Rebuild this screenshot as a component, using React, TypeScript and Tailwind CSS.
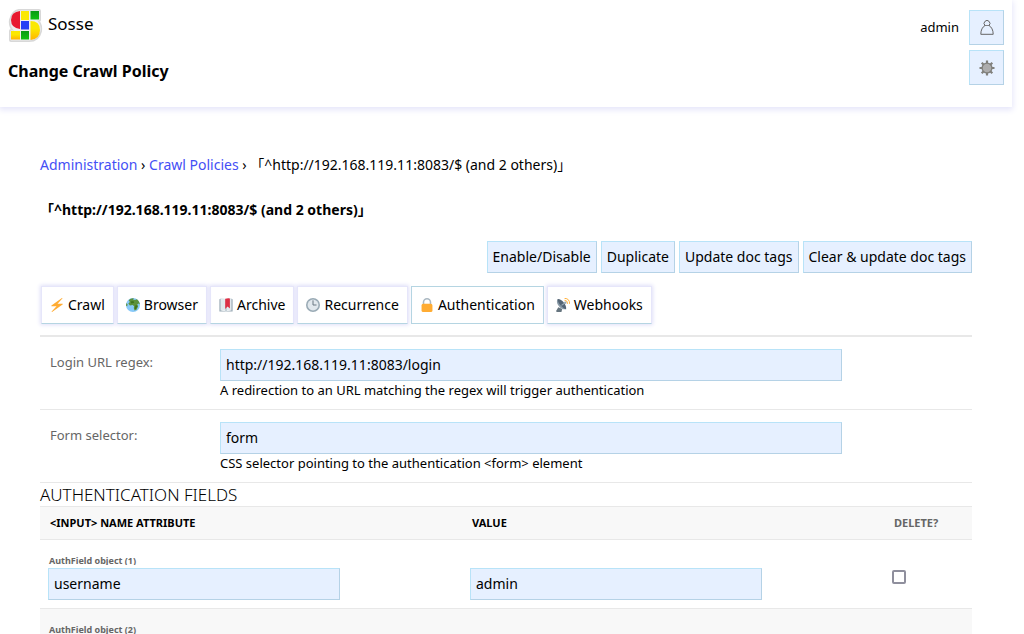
import React from "react";
import clsx from "clsx";

const boxBorder =
  "border border-t-[#b8e3f8] border-l-[#b8e3f8] border-r-[#b5d2e6] border-b-[#b5d2e6] bg-[#e6f0ff]";

const Logo: React.FC = () => (
  <svg viewBox="1 1 36 36" className="w-9 h-9" aria-hidden="true">
    <defs>
      <linearGradient id="yellow" x1="0" y1="0" x2="0" y2="1">
        <stop offset="0.4" stopColor="#fbe800" />
        <stop offset="1" stopColor="#ffb400" />
      </linearGradient>
      <linearGradient id="green" x1="0" y1="0" x2="0" y2="1">
        <stop offset="0" stopColor="#0a9a14" />
        <stop offset="1" stopColor="#10c010" />
      </linearGradient>
    </defs>
    <path
      d="M12 4H32V13H29Q34 17 33 24Q31 33 22 33H4V24H8Q3 20 4 13Q6 5 12 4Z"
      fill="#ddd"
      stroke="#d8d8d8"
      strokeWidth="4"
      strokeLinejoin="round"
    />
    <path
      d="M12 4H32V13H29Q34 17 33 24Q31 33 22 33H4V24H8Q3 20 4 13Q6 5 12 4Z"
      fill="#eee"
      stroke="#eee"
      strokeWidth="1"
    />
    <path d="M13 4V22Q4 21 4 13Q4 5 13 4Z" fill="#e8192f" />
    <path d="M14 4H22V13H14Z" fill="#fbe800" />
    <path d="M23.500 4H32V12.500H23.500Z" fill="url(#green)" />
    <path d="M14 14H22V22.500H14Z" fill="#2340f5" />
    <path d="M23.500 14Q33 14 33 23Q33 32 23.500 33Z" fill="url(#yellow)" />
    <path d="M4 24H13V32.500H4Z" fill="url(#yellow)" />
    <path d="M14 24H22V32.500H14Z" fill="url(#green)" />
  </svg>
);

const UserIcon: React.FC = () => (
  <svg viewBox="0 0 14 16" className="w-3.5 h-4 -mt-0.5" fill="none" stroke="#666" aria-hidden="true">
    <path d="M5 6.500A2.900 2.900 0 1 1 9 6.500C11.500 8 13.200 11 13.200 15.300H0.800C0.800 11 2.500 8 5 6.500Z" />
    <path d="M4.500 6.500H9.500" strokeWidth="0.800" />
  </svg>
);

const GearIcon: React.FC = () => (
  <svg viewBox="0 0 16 16" className="w-4 h-4" aria-hidden="true">
    <g stroke="#80807c" strokeWidth="2.200">
      <path d="M8 0.500V15.500M0.500 8H15.500M2.700 2.700L13.300 13.300M13.300 2.700L2.700 13.300" />
    </g>
    <circle cx="8" cy="8" r="4.900" fill="#adadad" stroke="#80807c" strokeWidth="1.300" />
  </svg>
);

const BoltIcon = () => (
  <path
    fill="#ffac33"
    d="M32.900 15.600c-.1-.4-.5-.6-.9-.6H19.400L31.800 1.600c.3-.3.4-.9.1-1.200-.3-.4-.8-.5-1.200-.2l-27 19.100c-.3.3-.5.7-.4 1.100.2.400.5.600 1 .600h12.600L4.200 34.400c-.3.300-.4.900-.1 1.200.3.400.8.500 1.200.2l27-19.100c.5-.3.700-.7.600-1.100z"
  />
);

const GlobeIcon = () => (
  <>
    <circle fill="#88c9f9" cx="18" cy="18" r="18" />
    <path
      fill="#5c913b"
      d="M7 6C10 2 16 0 20 1L18 4L23 5L28 3C32 6 35 11 36 17L32 14L29 17L31 22L27 30L22 32L20 26L21 21L17 18L10 19L6 14L10 10ZM1 13L4 16L3 22L0 19Z"
    />
    <path fill="#3e721d" d="M12 9L19 8L21 12L14 14ZM25 18L30 20L25 29L22 27Z" />
  </>
);

const BookmarkIcon = () => (
  <>
    <path fill="#99aab5" d="M1 3L6 1V32L18 34L30 32V1L35 3V35H1Z" />
    <path fill="#e1e8ed" d="M4 1Q12 0 18 3Q25 0 32 1V32Q24 31 18 34Q11 31 4 32Z" />
    <path fill="#99aab5" d="M17 3H19V34H17Z" />
    <path fill="#dd2e44" d="M16 2Q22 0 28 1V27L22 22L16 28Z" />
  </>
);

const ClockIcon = () => (
  <>
    <circle fill="#99aab5" cx="18" cy="18" r="18" />
    <circle fill="#e1e8ed" cx="18" cy="18" r="14" />
    <path d="M18 7V18H26" fill="none" stroke="#66757f" strokeWidth="2.500" strokeLinecap="round" />
  </>
);

const LockIcon = () => (
  <>
    <path d="M9 20V11a9 9 0 0 1 18 0V20" fill="none" stroke="#aab8c2" strokeWidth="4" />
    <rect x="4" y="15" width="28" height="21" rx="4" fill="#ffac33" />
  </>
);

const AntennaIcon = () => (
  <>
    <path fill="#66757f" d="M6 24L16 28L14 36H1V32Z" />
    <path fill="#8899a6" d="M4 3C-2 13 11 31 26 29Z" />
    <path fill="#546575" d="M4 3C13 1 28 17 26 29C16 25 5 14 4 3Z" />
    <path d="M14 19L24 12" stroke="#99aab5" strokeWidth="3" />
    <circle cx="24" cy="12" r="3" fill="#99aab5" />
    <path
      d="M23 6Q30 6 30 14M23 1Q35 1 35 14"
      fill="none"
      stroke="#ffac33"
      strokeWidth="2.500"
      strokeLinecap="round"
    />
  </>
);

const tabs = [
  { label: "Crawl", icon: BoltIcon },
  { label: "Browser", icon: GlobeIcon },
  { label: "Archive", icon: BookmarkIcon },
  { label: "Recurrence", icon: ClockIcon },
  { label: "Authentication", icon: LockIcon },
  { label: "Webhooks", icon: AntennaIcon },
];

const actions = ["Enable/Disable", "Duplicate", "Update doc tags", "Clear & update doc tags"];

const fields = [
  {
    id: "login_url_re",
    label: "Login URL regex:",
    value: "http://192.168.119.11:8083/login",
    help: "A redirection to an URL matching the regex will trigger authentication",
  },
  {
    id: "form_selector",
    label: "Form selector:",
    value: "form",
    help: "CSS selector pointing to the authentication <form> element",
  },
];

const authFields = [
  { name: "username", value: "admin" },
  { name: "password", value: "admin" },
];

const App: React.FC = () => {
  const policy = "「^http://192.168.119.11:8083/$ (and 2 others)」";

  return (
    <div className="h-screen overflow-hidden pr-3 bg-white text-black text-sm font-['Noto_Sans','Noto_Sans_CJK_JP',sans-serif]">
      {/* Header */}
      <header className="flex justify-between px-2 pt-2 pb-[22px] shadow-[0_2px_6px_1px_#e6e6fa]">
        <div>
          <a href="#" className="flex items-center gap-1 text-[17px] leading-6">
            <Logo />
            <span className="pb-1">Sosse</span>
          </a>
          <h1 className="mt-[15px] text-base font-bold">Change Crawl Policy</h1>
        </div>
        <div className="flex gap-2.5 pt-0.5">
          <span className="h-[35px] flex items-center text-[13px]">admin</span>
          <div className="flex flex-col gap-[5px]">
            <button aria-label="User" className={clsx("w-[35px] h-[35px] flex items-center justify-center", boxBorder)}>
              <UserIcon />
            </button>
            <button aria-label="Settings" className={clsx("w-[35px] h-[35px] flex items-center justify-center", boxBorder)}>
              <GearIcon />
            </button>
          </div>
        </div>
      </header>

      <main className="px-10 pt-12">
        <nav className="leading-5">
          <a href="#" className="text-[#444ff5]">Administration</a>
          {" › "}
          <a href="#" className="text-[#444ff5]">Crawl Policies</a>
          {" › "}
          {policy}
        </nav>
        <h2 className="mt-[25px] leading-5 font-bold">{policy}</h2>

        {/* Actions */}
        <div className="mt-[21px] flex justify-end gap-1">
          {actions.map((action) => (
            <button key={action} className={clsx("h-8 px-[5px]", boxBorder)}>
              {action}
            </button>
          ))}
        </div>

        {/* Tabs */}
        <div className="mt-[13px] ml-px flex gap-[3px]">
          {tabs.map(({ label, icon: Icon }) => (
            <button
              key={label}
              className={clsx(
                "h-[38px] px-2 flex items-center gap-1 border border-b-[#b5d5e2]",
                label === "Authentication"
                  ? "border-[#b5d5e2]"
                  : "border-x-[#e6e6fa] border-t-[#e6e6fa] shadow-[0_0_4px_1px_#e0e0f8]"
              )}
            >
              <svg viewBox="0 0 36 36" className="w-3.5 h-3.5" aria-hidden="true">
                <Icon />
              </svg>
              {label}
            </button>
          ))}
        </div>

        {/* Form rows */}
        <div className="mt-[11px] border-t-2 border-[#e8e8e8]">
          {fields.map((field) => (
            <div key={field.id} className="flex px-2.5 pt-3 pb-2.5 border-b border-[#e8e8e8]">
              <label htmlFor={field.id} className="w-[170px] shrink-0 pt-1 text-[13px] leading-[18px] text-[#666]">
                {field.label}
              </label>
              <div className="grow">
                <input
                  id={field.id}
                  defaultValue={field.value}
                  className={clsx("block w-full max-w-[622px] h-8 px-[5px] pb-0.5", boxBorder)}
                />
                <p className="text-[13px] leading-[18px]">{field.help}</p>
              </div>
            </div>
          ))}
        </div>

        {/* Authentication fields */}
        <h2 className="text-[17px] leading-[23px] font-light uppercase">Authentication fields</h2>
        <table className="w-full table-fixed border-collapse">
          <colgroup>
            <col />
            <col />
            <col className="w-[88px]" />
          </colgroup>
          <thead>
            <tr className="h-[33px] border-y border-[#e8e8e8] bg-[#f8f8f8] text-left text-[11px] uppercase">
              <th className="px-2.5 font-bold">&lt;input&gt; name attribute</th>
              <th className="px-2.5 font-bold">Value</th>
              <th className="px-2.5 font-bold text-[#666]">Delete?</th>
            </tr>
          </thead>
          <tbody>
            {authFields.map((field, index) => (
              <tr key={field.name} className="border-b border-[#e8e8e8] align-bottom even:bg-[#f8f8f8]">
                <td className="px-2 pt-3.5 pb-2">
                  <p className="h-[11px] mb-[3px] px-px overflow-hidden text-[9px] leading-[14px] font-bold text-[#666]">
                    AuthField object ({index + 1})
                  </p>
                  <input
                    aria-label="<input> name attribute"
                    defaultValue={field.name}
                    className={clsx("block w-[292px] h-8 px-[5px] pb-0.5", boxBorder)}
                  />
                </td>
                <td className="px-2 pb-2">
                  <input
                    aria-label="Value"
                    defaultValue={field.value}
                    className={clsx("block w-[292px] h-8 px-[5px] pb-0.5", boxBorder)}
                  />
                </td>
                <td className="px-2 pb-6">
                  <input
                    type="checkbox"
                    aria-label="Delete?"
                    className="block w-3.5 h-3.5 appearance-none bg-white border-2 border-[#8f8f9d] rounded-xs checked:bg-[#8f8f9d]"
                  />
                </td>
              </tr>
            ))}
          </tbody>
        </table>
      </main>
    </div>
  );
};

export default App;
